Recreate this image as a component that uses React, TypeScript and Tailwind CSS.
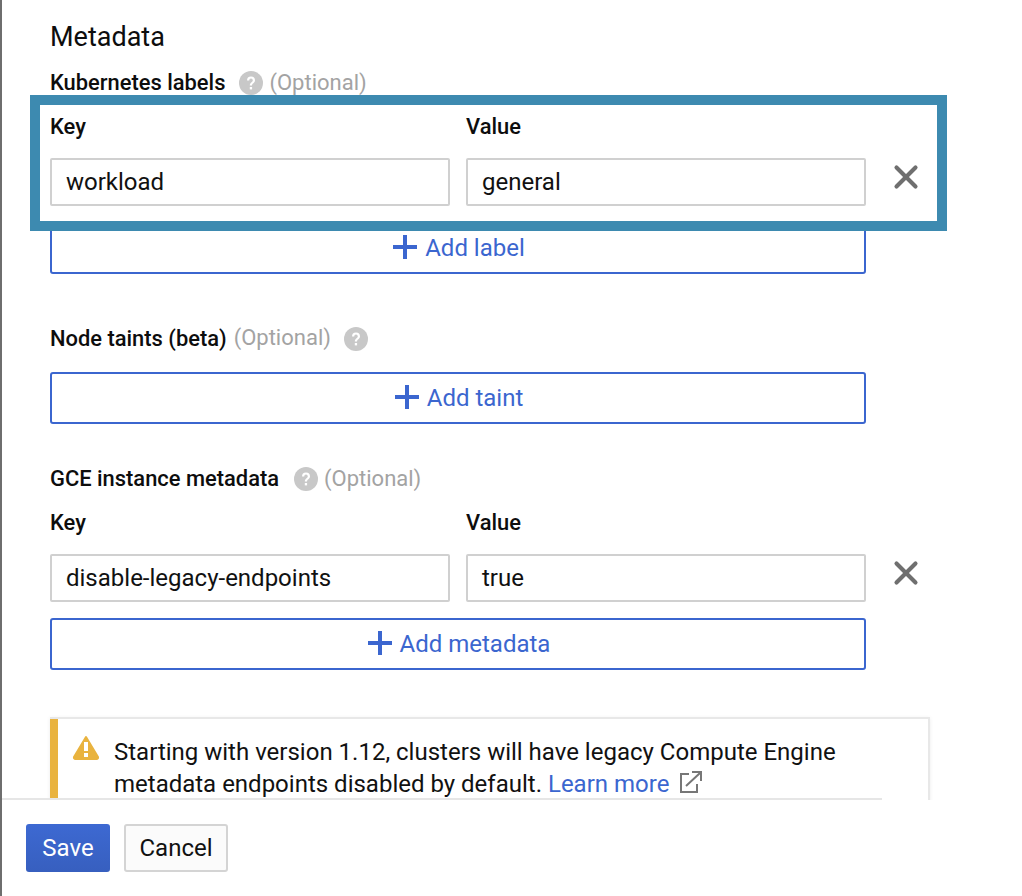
import { X } from "lucide-react";

const font = { fontFamily: "Roboto, sans-serif" };

function HelpIcon() {
  return (
    <svg width="24" height="24" viewBox="0 0 24 24" className="shrink-0">
      <circle cx="12" cy="12" r="12" fill="#c8c8c8" />
      <path d="M8 9.4a4 4 0 0 1 8 0c0 2.6-3 2.7-3 5.1h-2.2c0-3.3 3-3.3 3-5.1a1.8 1.8 0 0 0-3.6 0z" fill="#fff" />
      <rect x="10.8" y="16" width="2.3" height="2.4" fill="#fff" />
    </svg>
  );
}

function PlusIcon() {
  return (
    <svg width="24" height="24" viewBox="0 0 24 24" className="mb-[2px] shrink-0" fill="currentColor">
      <rect x="10" y="0" width="4" height="24" />
      <rect x="0" y="10" width="24" height="4" />
    </svg>
  );
}

function Optional() {
  return <span className="text-[22px] leading-[26px] text-[#a3a3a3]">(Optional)</span>;
}

function FieldLabel({ children }: { children: string }) {
  return <span className="text-[21.9px] leading-[26px] font-medium text-[#0d0d0d]">{children}</span>;
}

function KeyValueRow({ itemKey, value }: { itemKey: string; value: string }) {
  return (
    <div>
      <div className="flex gap-4">
        <div className="w-[400px]">
          <FieldLabel>Key</FieldLabel>
        </div>
        <div className="w-[400px]">
          <FieldLabel>Value</FieldLabel>
        </div>
      </div>
      <div className="mt-[17px] flex items-center gap-4">
        <div className="flex h-12 w-[400px] items-center rounded-[2px] border-2 border-[#d0d0d0] pl-[14px] text-[24px] text-[#111]">
          {itemKey}
        </div>
        <div className="flex h-12 w-[400px] items-center rounded-[2px] border-2 border-[#d0d0d0] pl-[14px] text-[24px] text-[#111]">
          {value}
        </div>
        <X size={38} strokeWidth={2.6} className="mb-[10px] ml-[5px] text-[#6f6f6f]" />
      </div>
    </div>
  );
}

function AddButton({ label, className }: { label: string; className?: string }) {
  return (
    <div
      className={`flex h-[52px] w-[816px] items-center justify-center gap-[8px] rounded-[3px] border-2 border-[#3b66cf] pl-[2px] text-[24px] text-[#3b66cf] ${className ?? ""}`}
    >
      <PlusIcon />
      <span>{label}</span>
    </div>
  );
}

export default function App() {
  return (
    <div className="h-[896px] w-[1022px] overflow-hidden border-l-2 border-[#6e6e6e] bg-white" style={font}>
      <div className="h-[800px] overflow-hidden pl-[48px]">
        <h2 className="pt-[20px] text-[27px] leading-[34px] font-normal text-[#0d0d0d]">Metadata</h2>

        <div className="mt-[16px] flex items-center">
          <FieldLabel>Kubernetes labels</FieldLabel>
          <span className="ml-[14px] mr-[6px] flex">
            <HelpIcon />
          </span>
          <Optional />
        </div>

        <div className="relative z-10 -mt-[1px] -ml-[20px] w-[917px] border-[10px] border-[#3d8ab0] bg-white px-[10px] pt-[9px] pb-[15px]">
          <KeyValueRow itemKey="workload" value="general" />
        </div>
        <AddButton label="Add label" className="-mt-[9px]" />

        <div className="mt-[51px] flex items-center">
          <FieldLabel>Node taints (beta)</FieldLabel>
          <span className="ml-[7px] mr-[13px]">
            <Optional />
          </span>
          <HelpIcon />
        </div>
        <AddButton label="Add taint" className="mt-[20px]" />

        <div className="mt-[42px] flex items-center">
          <FieldLabel>GCE instance metadata</FieldLabel>
          <span className="ml-[15px] mr-[6px] flex">
            <HelpIcon />
          </span>
          <Optional />
        </div>

        <div className="mt-[18px]">
          <KeyValueRow itemKey="disable-legacy-endpoints" value="true" />
        </div>
        <AddButton label="Add metadata" className="mt-[16px]" />

        <div className="mt-[47px] flex h-[90px] w-[880px] border-2 border-l-0 border-[#e8e8e8] shadow-[0_1px_4px_rgba(0,0,0,0.08)]">
          <div className="w-[8px] shrink-0 bg-[#e9b33f]" />
          <svg width="28" height="26" viewBox="0 0 28 26" className="ml-[14px] mt-[16px] shrink-0">
            <path d="M14 2 L26 22 a1.5 1.5 0 0 1 -1.5 2 H3.5 a1.5 1.5 0 0 1 -1.5 -2 Z" fill="#e9b33f" stroke="#e9b33f" strokeWidth="2" strokeLinejoin="round" />
            <rect x="12" y="7" width="4" height="9" fill="#fff" />
            <rect x="12" y="18" width="4" height="4" fill="#fff" />
          </svg>
          <p className="ml-[14px] pt-[17px] text-[24px] leading-[32px] text-[#111]">
            Starting with version 1.12, clusters will have legacy Compute Engine
            <br />
            metadata endpoints disabled by default. <span className="text-[#3b66cf]">Learn more</span>
            <svg width="22" height="22" viewBox="0 0 22 22" fill="none" stroke="#777" strokeWidth="2" className="ml-[11px] inline-block align-[-1px]">
              <path d="M9 3H1v18h16v-8" />
              <path d="M6 15 20 2M12 1h9v9" />
            </svg>
          </p>
        </div>
      </div>

      <div className="relative -mt-[2px] h-[98px] w-[880px] border-t-2 border-[#e6e6e6] bg-white pl-[24px] pt-[24px]">
        <div className="flex gap-[14px]">
          <div className="flex h-[48px] w-[84px] items-center justify-center rounded-[3px] bg-gradient-to-b from-[#3d69d2] to-[#375fbf] text-[24px] text-white">
            Save
          </div>
          <div className="flex h-[48px] w-[104px] items-center justify-center rounded-[3px] border-2 border-[#d4d4d4] bg-[#fbfbfb] text-[24px] text-[#111]">
            Cancel
          </div>
        </div>
      </div>
    </div>
  );
}
